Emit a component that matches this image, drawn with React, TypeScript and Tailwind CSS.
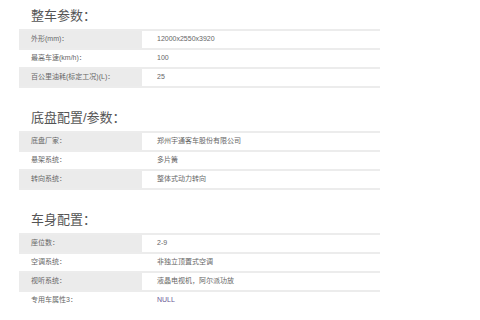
const sections = [
  {
    title: "整车参数：",
    rows: [
      ["外形(mm)：", "12000x2550x3920"],
      ["最高车速(km/h)：", "100"],
      ["百公里油耗(标定工况)(L)：", "25"],
    ],
  },
  {
    title: "底盘配置/参数：",
    rows: [
      ["底盘厂家：", "郑州宇通客车股份有限公司"],
      ["悬架系统：", "多片簧"],
      ["转向系统：", "整体式动力转向"],
    ],
  },
  {
    title: "车身配置：",
    rows: [
      ["座位数：", "2-9"],
      ["空调系统：", "非独立顶置式空调"],
      ["视听系统：", "液晶电视机，阿尔派功放"],
      ["专用车属性3：", "NULL"],
    ],
  },
];

export default function App() {
  return (
    <div
      className="w-[480px] h-[320px] overflow-hidden bg-white pl-[19px]"
      style={{ fontFamily: '"Liberation Sans", "Noto Sans CJK SC", sans-serif' }}
    >
      {sections.map((s, si) => (
        <div key={si} className={si === 0 ? "pt-[6px]" : "pt-[20px]"}>
          {/* section heading */}
          <h3 className="h-[20px] leading-[20px] pl-[12px] mb-[3px] text-[13px] text-[#555]">
            {s.title}
          </h3>
          <div className={"w-[361px] " + (si < 2 ? "border-b-2 border-[#ececec]" : "")}>
            {s.rows.map((r, ri) => {
              const isNull = r[1] === "NULL";
              return (
                <div key={ri} className="flex h-[19px] border-t-2 border-[#ececec] text-[7px] text-[#666]">
                  <div
                    className={
                      "w-[123px] pl-[12px] flex items-center " +
                      (ri % 2 === 0 ? "bg-[#ebebeb]" : "bg-white")
                    }
                  >
                    {r[0]}
                  </div>
                  <div className={"flex-1 pl-[15px] flex items-center " + (isNull ? "text-[#6a5a96]" : "")}>
                    {r[1]}
                  </div>
                </div>
              );
            })}
          </div>
        </div>
      ))}
    </div>
  );
}
